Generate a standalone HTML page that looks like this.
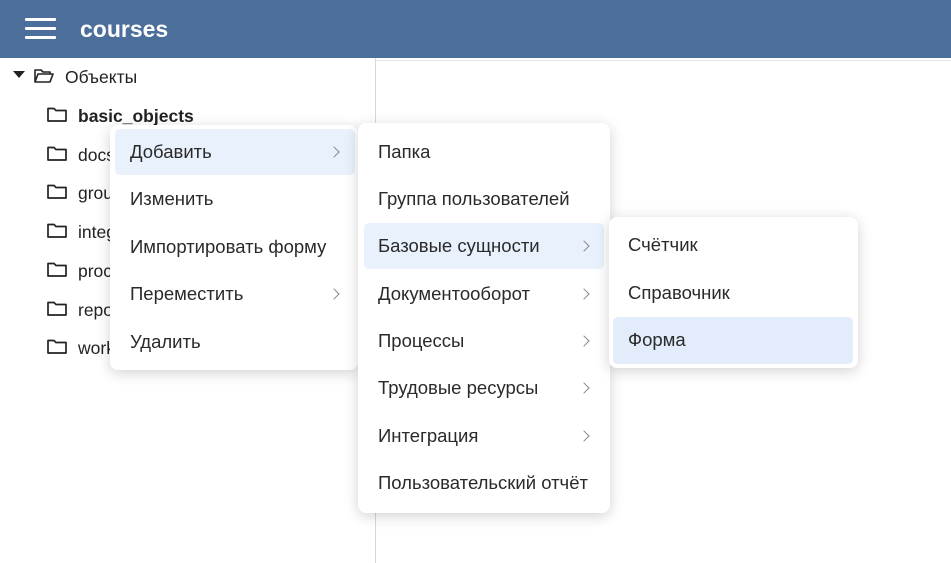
<!DOCTYPE html>
<html><head><meta charset="utf-8"><style>
*{margin:0;padding:0;box-sizing:border-box}
body{width:951px;height:563px;overflow:hidden;background:#fff;font-family:"Liberation Sans","DejaVu Sans",sans-serif;color:#222;position:relative}
.hdr{position:absolute;left:0;top:0;width:951px;height:58px;background:#4c6e9b}
.hb{position:absolute;left:25px;width:31px;height:3px;background:#fff;border-radius:1px}
.title{position:absolute;left:80px;top:16px;color:#fff;font-weight:bold;font-size:23px}
.div{position:absolute;left:375px;top:58px;width:1px;height:505px;background:#d8d8d8}
.hl{position:absolute;left:376px;top:60px;width:575px;height:1px;background:#e4e4e4}
.t{position:absolute;font-size:17.5px;white-space:nowrap}
.f{position:absolute;width:20px;height:16px}
.menu{position:absolute;background:#fff;border-radius:8px;box-shadow:0 3px 14px rgba(0,0,0,.18)}
.it{position:absolute;font-size:18.5px;color:#2a2a2a;white-space:nowrap;line-height:20px}
.sel{position:absolute;background:#e9f1fc;border-radius:5px}
.ch{position:absolute;width:8px;height:8px;border-right:1.6px solid #888;border-top:1.6px solid #888;transform:rotate(45deg)}
</style></head><body>
<div class="hdr">
<div class="hb" style="top:18px"></div><div class="hb" style="top:27px"></div><div class="hb" style="top:36px"></div>
<div class="title">courses</div></div>
<div class="div"></div><div class="hl"></div>
<svg style="position:absolute;left:12px;top:70px" width="14" height="10"><path d="M1 1H13L7 8Z" fill="#222"/></svg>
<svg class="f" style="left:34px;top:68px" viewBox="0 0 20 16"><path d="M1 14V2H7L9 4H16V6M1 14L4 6H19L16 14Z" fill="none" stroke="#222" stroke-width="1.6" stroke-linejoin="round"/></svg>
<div class="t" style="left:65px;top:67px">Объекты</div>
<svg class="f" style="left:47px;top:107px" viewBox="0 0 20 16"><path d="M1 14V1.5H7L9 3.5H19V14Z" fill="none" stroke="#222" stroke-width="1.7" stroke-linejoin="round"/></svg>
<div class="t" style="left:78px;top:106px;font-weight:bold">basic_objects</div>
<svg class="f" style="left:47px;top:146px" viewBox="0 0 20 16"><path d="M1 14V1.5H7L9 3.5H19V14Z" fill="none" stroke="#222" stroke-width="1.7" stroke-linejoin="round"/></svg>
<div class="t" style="left:78px;top:145px">docs</div>
<svg class="f" style="left:47px;top:184px" viewBox="0 0 20 16"><path d="M1 14V1.5H7L9 3.5H19V14Z" fill="none" stroke="#222" stroke-width="1.7" stroke-linejoin="round"/></svg>
<div class="t" style="left:78px;top:183px">groups</div>
<svg class="f" style="left:47px;top:223px" viewBox="0 0 20 16"><path d="M1 14V1.5H7L9 3.5H19V14Z" fill="none" stroke="#222" stroke-width="1.7" stroke-linejoin="round"/></svg>
<div class="t" style="left:78px;top:222px">integ</div>
<svg class="f" style="left:47px;top:262px" viewBox="0 0 20 16"><path d="M1 14V1.5H7L9 3.5H19V14Z" fill="none" stroke="#222" stroke-width="1.7" stroke-linejoin="round"/></svg>
<div class="t" style="left:78px;top:261px">proc</div>
<svg class="f" style="left:47px;top:301px" viewBox="0 0 20 16"><path d="M1 14V1.5H7L9 3.5H19V14Z" fill="none" stroke="#222" stroke-width="1.7" stroke-linejoin="round"/></svg>
<div class="t" style="left:78px;top:300px">repo</div>
<svg class="f" style="left:47px;top:339px" viewBox="0 0 20 16"><path d="M1 14V1.5H7L9 3.5H19V14Z" fill="none" stroke="#222" stroke-width="1.7" stroke-linejoin="round"/></svg>
<div class="t" style="left:78px;top:338px">work</div>

<div class="menu" style="left:110px;top:125px;width:248px;height:245px">
<div class="sel" style="left:5px;top:4px;width:240px;height:46px"></div>
<div class="it" style="left:20px;top:17px">Добавить</div><div class="ch" style="left:220px;top:23px"></div>
<div class="it" style="left:20px;top:64px">Изменить</div>
<div class="it" style="left:20px;top:112px">Импортировать форму</div>
<div class="it" style="left:20px;top:159px">Переместить</div><div class="ch" style="left:220px;top:165px"></div>
<div class="it" style="left:20px;top:207px">Удалить</div>
</div>

<div class="menu" style="left:358px;top:123px;width:252px;height:390px">
<div class="sel" style="left:6px;top:100px;width:240px;height:46px"></div>
<div class="it" style="left:20px;top:19px">Папка</div>
<div class="it" style="left:20px;top:66px">Группа пользователей</div>
<div class="it" style="left:20px;top:113px">Базовые сущности</div><div class="ch" style="left:222px;top:119px"></div>
<div class="it" style="left:20px;top:161px">Документооборот</div><div class="ch" style="left:222px;top:167px"></div>
<div class="it" style="left:20px;top:208px">Процессы</div><div class="ch" style="left:222px;top:214px"></div>
<div class="it" style="left:20px;top:255px">Трудовые ресурсы</div><div class="ch" style="left:222px;top:261px"></div>
<div class="it" style="left:20px;top:303px">Интеграция</div><div class="ch" style="left:222px;top:309px"></div>
<div class="it" style="left:20px;top:350px">Пользовательский отчёт</div>
</div>

<div class="menu" style="left:609px;top:217px;width:249px;height:151px">
<div class="sel" style="left:4px;top:100px;width:240px;height:47px;background:#e2ecfa"></div>
<div class="it" style="left:19px;top:18px">Счётчик</div>
<div class="it" style="left:19px;top:66px">Справочник</div>
<div class="it" style="left:19px;top:113px">Форма</div>
</div>
</body></html>
